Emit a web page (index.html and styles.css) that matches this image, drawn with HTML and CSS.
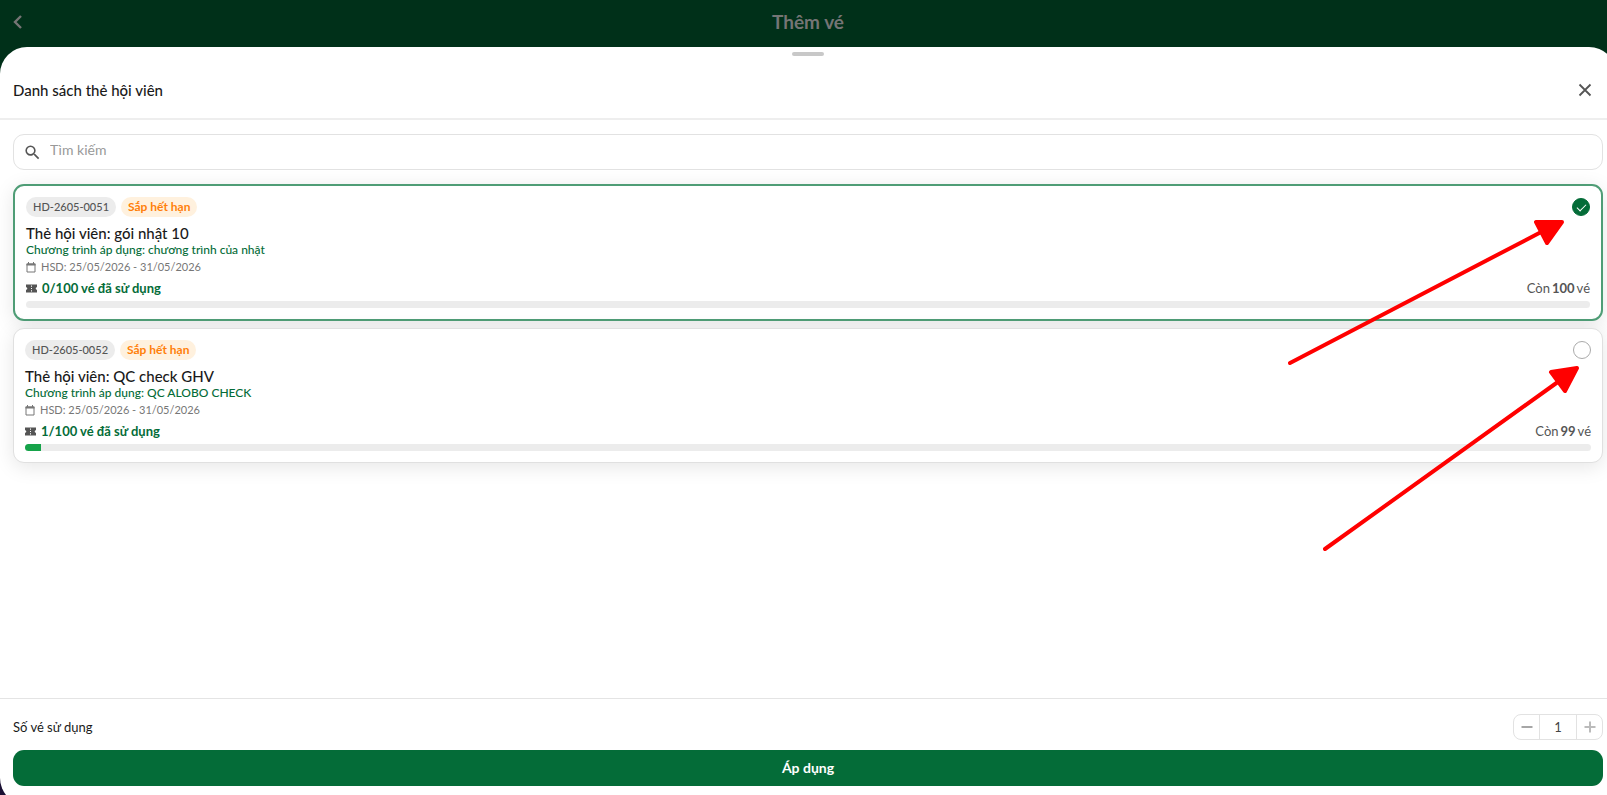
FILE: index.html
```html
<!DOCTYPE html>
<html lang="vi">
<head>
    <meta charset="UTF-8">
    <meta name="viewport" content="width=device-width, initial-scale=1.0">
    <title>Thêm vé</title>
    <link rel="stylesheet" href="styles.css">
</head>
<body>
    <div class="app">
        <!-- Thanh tiêu đề -->
        <header class="topbar">
            <button class="icon-btn back-btn" type="button" aria-label="Quay lại">
                <svg width="9" height="14" viewBox="0 0 9 14"><path d="M8 1L2 7l6 6" fill="none" stroke="currentColor" stroke-width="2.400"/></svg>
            </button>
            <h1>Thêm vé</h1>
        </header>

        <main class="sheet">
            <div class="handle"></div>
            <div class="sheet-header">
                <h2>Danh sách thẻ hội viên</h2>
                <button class="icon-btn" type="button" aria-label="Đóng">
                    <svg width="14" height="14" viewBox="0 0 14 14"><path d="M1.500 1.500l11 11M12.500 1.500l-11 11" fill="none" stroke="currentColor" stroke-width="1.800"/></svg>
                </button>
            </div>

            <div class="sheet-body">
                <label class="search">
                    <svg width="19" height="19" viewBox="0 0 24 24"><path fill="currentColor" d="M15.500 14h-.79l-.28-.27A6.470 6.470 0 0 0 16 9.500 6.500 6.500 0 1 0 9.500 16c1.610 0 3.090-.59 4.230-1.570l.27.28v.79l5 4.990L20.490 19l-4.990-5zm-6 0C7.010 14 5 11.990 5 9.500S7.010 5 9.500 5 14 7.010 14 9.500 11.990 14 9.500 14z"/></svg>
                    <input type="text" placeholder="Tìm kiếm" aria-label="Tìm kiếm">
                </label>

                <!-- Danh sách thẻ -->
                <div class="card-list">
                    <label class="card selected">
                        <span class="card-top">
                            <span class="chip">HD-2605-0051</span>
                            <span class="chip chip-warn">Sắp hết hạn</span>
                            <input class="pick" type="radio" name="card" checked>
                        </span>
                        <span class="card-name">Thẻ hội viên: gói nhật 10</span>
                        <span class="card-program">Chương trình áp dụng: chương trình của nhật</span>
                        <span class="card-date">
                            <svg width="10" height="11" viewBox="0 0 10 11"><path fill="none" stroke="currentColor" d="M1 2h8v8H1z"/><path fill="currentColor" d="M0.500 1.500h9v2h-9zM2 0h1v2H2zM7 0h1v2H7z"/></svg>
                            HSD: 25/05/2026 - 31/05/2026
                        </span>
                        <span class="card-usage">
                            <svg width="11" height="9" viewBox="0 0 11 9"><path fill="currentColor" fill-rule="evenodd" d="M0 0.500h11v2.700a1.300 1.300 0 0 0 0 2.600v2.700H0V5.800a1.300 1.300 0 0 0 0-2.600zM5 1.500v1.200h1V1.500zM5 3.900v1.200h1V3.900zM5 6.300v1.200h1V6.300z"/></svg>
                            <b>0/100 vé đã sử dụng</b>
                            <span class="remain">Còn <b>100</b> vé</span>
                        </span>
                        <span class="bar"><span class="bar-fill" style="width: 0%"></span></span>
                    </label>

                    <label class="card">
                        <span class="card-top">
                            <span class="chip">HD-2605-0052</span>
                            <span class="chip chip-warn">Sắp hết hạn</span>
                            <input class="pick" type="radio" name="card">
                        </span>
                        <span class="card-name">Thẻ hội viên: QC check GHV</span>
                        <span class="card-program">Chương trình áp dụng: QC ALOBO CHECK</span>
                        <span class="card-date">
                            <svg width="10" height="11" viewBox="0 0 10 11"><path fill="none" stroke="currentColor" d="M1 2h8v8H1z"/><path fill="currentColor" d="M0.500 1.500h9v2h-9zM2 0h1v2H2zM7 0h1v2H7z"/></svg>
                            HSD: 25/05/2026 - 31/05/2026
                        </span>
                        <span class="card-usage">
                            <svg width="11" height="9" viewBox="0 0 11 9"><path fill="currentColor" fill-rule="evenodd" d="M0 0.500h11v2.700a1.300 1.300 0 0 0 0 2.600v2.700H0V5.800a1.300 1.300 0 0 0 0-2.600zM5 1.500v1.200h1V1.500zM5 3.900v1.200h1V3.900zM5 6.300v1.200h1V6.300z"/></svg>
                            <b>1/100 vé đã sử dụng</b>
                            <span class="remain">Còn <b>99</b> vé</span>
                        </span>
                        <span class="bar"><span class="bar-fill" style="width: 1%"></span></span>
                    </label>

                    <!-- Mũi tên chỉ vào nút chọn -->
                    <svg class="arrows" width="320" height="380" viewBox="1283 184 320 380">
                        <g stroke="#ff0000" stroke-width="4" stroke-linecap="round" stroke-linejoin="round" fill="#ff0000">
                            <path d="M1290 363L1545 230M1325 549L1562 379"/>
                            <path d="M1536 222h26l-15 21zM1551 372l26-4-12 23z"/>
                        </g>
                    </svg>
                </div>
            </div>

            <footer class="sheet-footer">
                <div class="qty-row">
                    <label for="qty">Số vé sử dụng</label>
                    <div class="stepper">
                        <button type="button" aria-label="Giảm"><svg width="12" height="12" viewBox="0 0 12 12"><path d="M0.500 6h11" stroke="#a6a6a6" stroke-width="2"/></svg></button>
                        <input id="qty" type="text" value="1">
                        <button type="button" aria-label="Tăng"><svg width="12" height="12" viewBox="0 0 12 12"><path d="M0.500 6h11M6 .5v11" stroke="#bbb" stroke-width="2"/></svg></button>
                    </div>
                </div>
                <button class="apply-btn" type="button">Áp dụng</button>
            </footer>
        </main>
    </div>
</body>
</html>
```
FILE: styles.css
```css
* {
    box-sizing: border-box;
}

body {
    margin: 0;
    height: 100vh;
    overflow: hidden;
    background-color: #1a1033;
    color: #1a1a1a;
    font-family: Lato, "Noto Sans", sans-serif;
}

button,
input {
    font-family: inherit;
}

/* Khung ứng dụng rộng hơn cửa sổ một chút */
.app {
    display: flex;
    flex-direction: column;
    width: calc(100% + 9px);
    height: calc(100vh + 10px);
    background: linear-gradient(#003019 90px, #1a1033 90px);
}

.topbar {
    display: flex;
    align-items: center;
    height: 47px;
    padding: 0 13px 4px;
    color: #757575;
}

.topbar h1 {
    flex: 1;
    margin: 0 9px 0 0;
    font-size: 19px;
    line-height: 24px;
    font-weight: 700;
    text-align: center;
}

.icon-btn {
    display: flex;
    padding: 0;
    border: none;
    background: none;
    color: #555;
    cursor: pointer;
}

.back-btn {
    color: #757575;
}

.sheet {
    flex: 1;
    display: flex;
    flex-direction: column;
    background-color: #fff;
    border-radius: 27px;
}

.handle {
    width: 32px;
    height: 4px;
    margin: 5px auto 0;
    border-radius: 2px;
    background-color: #c8c8c8;
}

.sheet-header {
    display: flex;
    align-items: center;
    justify-content: space-between;
    height: 64px;
    padding: 6px 24px 0 13px;
    border-bottom: 2px solid #eee;
}

.sheet-header h2 {
    margin: 0;
    font-size: 15px;
    line-height: 20px;
    font-weight: 500;
}

.sheet-body {
    flex: 1;
    padding: 14px 13px;
}

.search {
    display: flex;
    align-items: center;
    gap: 8px;
    height: 36px;
    padding: 0 9px;
    border: 1px solid #e2e2e2;
    border-radius: 11px;
    color: #555;
}

.search input {
    flex: 1;
    padding: 0 0 5px;
    border: none;
    outline: none;
    background: none;
    font-size: 14px;
    line-height: 20px;
}

.search input::placeholder {
    color: #999;
}

.card-list {
    position: relative;
    display: flex;
    flex-direction: column;
    gap: 7px;
    margin-top: 14px;
}

.card {
    display: flex;
    flex-direction: column;
    padding: 11px;
    border: 1px solid #e0e0e0;
    border-radius: 11px;
    background-color: #fff;
    box-shadow: 0 4px 20px rgba(0, 0, 0, 0.1);
    cursor: pointer;
}

.card.selected {
    border: 2px solid #4f9d76;
}

.card-top {
    display: flex;
    align-items: center;
    gap: 5px;
    height: 20px;
}

.chip {
    padding: 0 7px;
    border-radius: 10px;
    background-color: #ececec;
    color: #555;
    font-size: 11px;
    line-height: 20px;
    font-weight: 500;
}

.chip-warn {
    background-color: #fff1de;
    color: #ff7f0a;
    font-size: 12px;
    font-weight: 700;
}

.pick {
    appearance: none;
    display: flex;
    align-items: center;
    justify-content: center;
    width: 18px;
    height: 18px;
    margin: 0 0 0 auto;
    border: 1px solid #aaa;
    border-radius: 50%;
}

.pick:checked {
    border-color: #046c38;
    background-color: #046c38;
}

.pick:checked::after {
    content: "";
    width: 8px;
    height: 4px;
    margin-bottom: 2px;
    border-left: 1px solid #fff;
    border-bottom: 1px solid #fff;
    transform: rotate(-45deg);
}

.card-name {
    margin-top: 6px;
    font-size: 15px;
    line-height: 20px;
    font-weight: 500;
}

.card-program {
    color: #046c38;
    font-size: 12px;
    line-height: 14px;
    font-weight: 500;
}

.card-date {
    display: flex;
    align-items: center;
    gap: 5px;
    margin-top: 3px;
    color: #777;
    font-size: 11px;
    line-height: 14px;
}

.card-usage {
    display: flex;
    align-items: center;
    gap: 5px;
    margin-top: 5px;
    color: #555;
    font-size: 13px;
    line-height: 18px;
}

.card-usage > b {
    color: #046c38;
}

.remain {
    display: flex;
    gap: 2px;
    margin-left: auto;
}

.bar {
    height: 7px;
    margin-top: 4px;
    border-radius: 4px;
    background-color: #ececec;
    overflow: hidden;
}

.bar-fill {
    display: block;
    height: 100%;
    background-color: #16a34a;
}

.arrows {
    position: absolute;
    top: 0;
    right: 0;
    pointer-events: none;
}

.sheet-footer {
    padding: 15px 13px 19px;
    border-top: 1px solid #e4e4e4;
}

.qty-row {
    display: flex;
    align-items: center;
    justify-content: space-between;
    font-size: 13px;
    line-height: 18px;
}

.stepper {
    display: flex;
    height: 26px;
    border: 1px solid #e2e2e2;
    border-radius: 8px;
}

.stepper button {
    display: flex;
    align-items: center;
    justify-content: center;
    width: 25px;
    padding: 0;
    border: none;
    background: none;
}

.stepper input {
    width: 38px;
    padding: 0;
    border: solid #e2e2e2;
    border-width: 0 1px;
    outline: none;
    background: none;
    color: #444;
    font-size: 13px;
    text-align: center;
}

.apply-btn {
    display: block;
    width: 100%;
    height: 36px;
    margin-top: 10px;
    padding: 0;
    border: none;
    border-radius: 11px;
    background-color: #046c38;
    color: #fff;
    font-size: 14px;
    line-height: 20px;
    font-weight: 700;
    cursor: pointer;
}
```
